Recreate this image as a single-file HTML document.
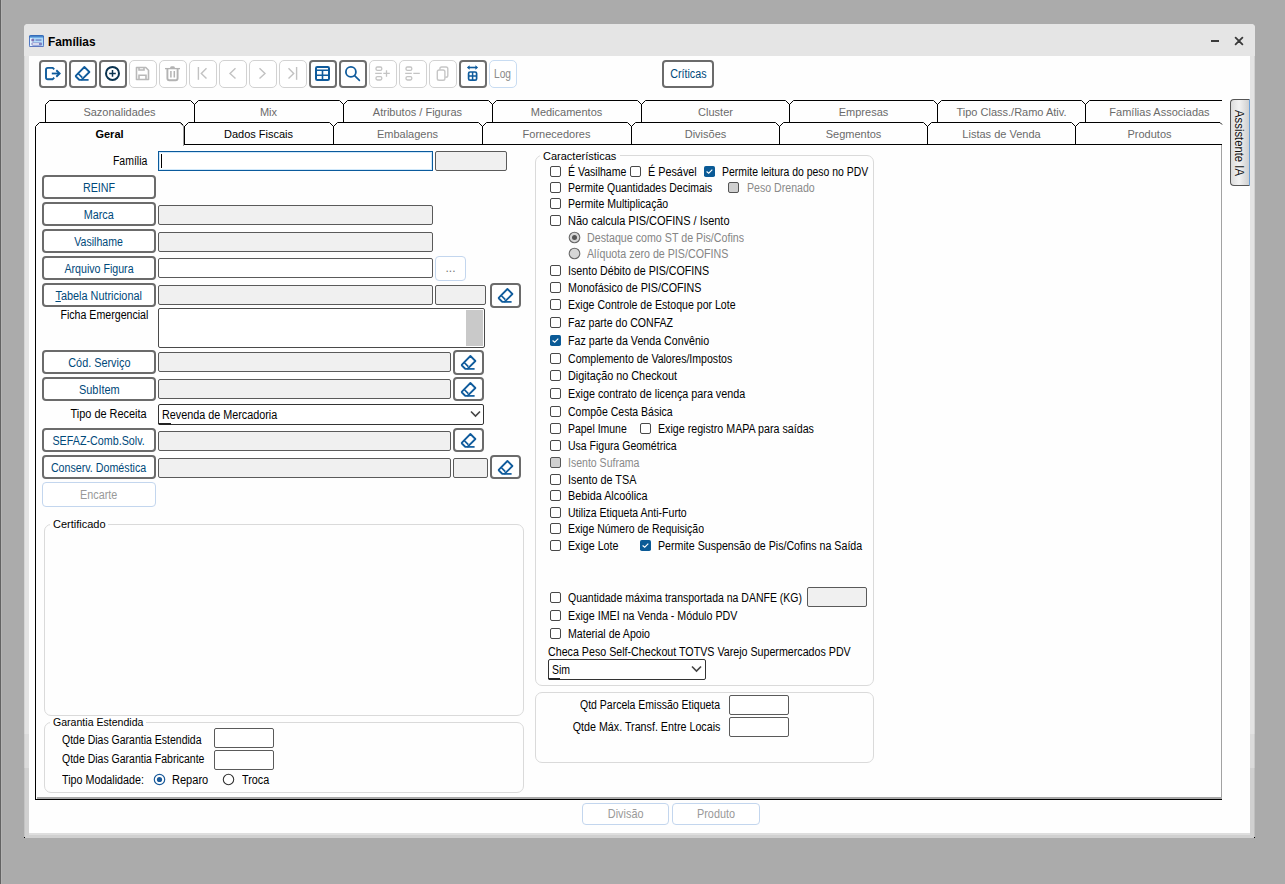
<!DOCTYPE html><html><head><meta charset="utf-8"><style>
html,body{margin:0;padding:0}
body{width:1285px;height:884px;position:relative;overflow:hidden;background:#ababab;font-family:"Liberation Sans",sans-serif}
.t{position:absolute;white-space:nowrap}
.b{position:absolute;box-sizing:border-box}
svg{position:absolute;overflow:visible}
</style></head><body>
<div class="b" style="left:0px;top:0px;width:1px;height:884px;background:#626262"></div>
<div class="b" style="left:1px;top:0px;width:1px;height:884px;background:#b3b3b3"></div>
<div class="b" style="left:24px;top:24px;width:1231px;height:814px;background:linear-gradient(#e3e3e3 0,#e3e3e3 710px,#dbdbdb 710px,#dbdbdb 744px,#d0d0d0 744px);border-radius:4px 4px 0 0"></div>
<div class="b" style="left:24px;top:56px;width:1px;height:782px;background:rgba(0,0,0,.06)"></div>
<div class="b" style="left:1254px;top:56px;width:1px;height:782px;background:rgba(0,0,0,.08)"></div>
<div class="b" style="left:24px;top:24px;width:1231px;height:32px;background:#e5e5e5;border-radius:4px 4px 0 0"></div>
<div class="b" style="left:29px;top:56px;width:1221px;height:777px;background:#fefefe"></div>
<div class="b" style="left:29px;top:833px;width:1221px;height:2px;background:#dedede"></div>
<svg style="left:29px;top:35px" width="16" height="13" viewBox="0 0 16 13">
<rect x="0.5" y="0.5" width="14" height="11" rx="0.8" fill="#b4defa" stroke="#4f78c4"/>
<path d="M0.5 1.2Q0.5 0.5 1.2 0.5H13.8Q14.5 0.5 14.5 1.2V2.2H0.5Z" fill="#1f5fae"/>
<rect x="1" y="1.5" width="13" height="1.6" fill="#73aee6"/>
<rect x="1" y="3.2" width="3" height="8" fill="#e4f4ff"/>
<circle cx="3.8" cy="5" r="1.6" fill="#7f73b4"/>
<rect x="6.5" y="4.4" width="6" height="1.3" fill="#6f7fc0"/>
<rect x="2.5" y="7.6" width="10.5" height="2.8" rx="0.8" fill="#7f7fc0"/>
<rect x="3.5" y="8.3" width="6.5" height="1.4" fill="#fff"/>
<path d="M0.5 11.5H14.5" stroke="#5f78c0" stroke-width="1"/>
</svg>
<div class="t" style="left:48px;top:35px;font:bold 12px/14px 'Liberation Sans';color:#000;transform:scaleX(0.99);transform-origin:0 0;">Famílias</div>
<div class="b" style="left:1211px;top:40px;width:8px;height:2px;background:#3a3a3a"></div>
<svg style="left:1234px;top:36px" width="11" height="11" viewBox="0 0 11 11"><path d="M1.6 1.6L8.4 8.4M8.4 1.6L1.6 8.4" stroke="#3a3a3a" stroke-width="1.8" stroke-linecap="round"/></svg>
<div class="b" style="left:1254px;top:837px;width:1px;height:1px;background:#000"></div>
<div class="b" style="left:24px;top:837px;width:1px;height:1px;background:#000"></div>
<div class="b" style="left:39px;top:60px;width:28px;height:28px;border:2px solid #6e6e6e;border-radius:4px;background:#fff"></div>
<svg style="left:39px;top:60px" width="28" height="28" viewBox="0 0 28 28"><path d="M15.2 9.4L13.8 7.9H8.8Q7 7.9 7 9.7V17.4Q7 19.2 8.8 19.2H13.8L15.2 17.7" fill="none" stroke="#0f5b9c" stroke-width="1.9" stroke-linejoin="round"/><path d="M12.8 13.5H20" stroke="#0f5b9c" stroke-width="1.8"/><path d="M17.3 10.3L20.6 13.5L17.3 16.7" fill="none" stroke="#0f5b9c" stroke-width="1.9"/></svg>
<div class="b" style="left:69px;top:60px;width:28px;height:28px;border:2px solid #6e6e6e;border-radius:4px;background:#fff"></div>
<svg style="left:69px;top:60px" width="28" height="28" viewBox="0 0 28 28"><path d="M6.9 15.6L15.4 7L20.4 12L12.5 19.9H10.9Q10.3 19.9 9.9 19.5L6.9 16.5Q6.5 16 6.9 15.6Z" fill="none" stroke="#0f5b9c" stroke-width="1.8" stroke-linejoin="round"/><path d="M9.2 13.5L13.3 17.6" stroke="#0f5b9c" stroke-width="1.7"/><path d="M12.5 19.9H19.6" stroke="#0f5b9c" stroke-width="1.7"/></svg>
<div class="b" style="left:99px;top:60px;width:28px;height:28px;border:2px solid #6e6e6e;border-radius:4px;background:#fff"></div>
<svg style="left:99px;top:60px" width="28" height="28" viewBox="0 0 28 28"><circle cx="13.5" cy="13.4" r="6.5" fill="none" stroke="#0a3350" stroke-width="2"/><path d="M13.5 10.1V16.7M10.2 13.4H16.8" stroke="#0a3350" stroke-width="1.5"/></svg>
<div class="b" style="left:129px;top:60px;width:28px;height:28px;border:1.5px solid #d2d2d2;border-radius:5px;background:#fff"></div>
<svg style="left:129px;top:60px" width="28" height="28" viewBox="0 0 28 28"><path d="M7.5 7.5H16.8L19.5 10.2V19.5H7.5Z" fill="none" stroke="#b9b9b9" stroke-width="1.6" stroke-linejoin="round"/><path d="M10 7.7V10H15V7.7" fill="none" stroke="#b9b9b9" stroke-width="1.6"/><path d="M10 19.3V15.3H17V19.3" fill="none" stroke="#b9b9b9" stroke-width="1.6"/></svg>
<div class="b" style="left:159px;top:60px;width:28px;height:28px;border:1.5px solid #d2d2d2;border-radius:5px;background:#fff"></div>
<svg style="left:159px;top:60px" width="28" height="28" viewBox="0 0 28 28"><path d="M6 8.6H21" stroke="#b3b3b3" stroke-width="1.3"/><path d="M11 8.3Q11 6.3 12.5 6.3H14.5Q16 6.3 16 8.3Z" fill="#b3b3b3"/><path d="M8.4 8.8V18.3Q8.4 20.2 10.3 20.2H16.7Q18.6 20.2 18.6 18.3V8.8" fill="none" stroke="#b3b3b3" stroke-width="1.9"/><path d="M11.9 11V17.4M15.3 11V17.4" stroke="#b3b3b3" stroke-width="1.5"/></svg>
<div class="b" style="left:189px;top:60px;width:28px;height:28px;border:1.5px solid #d2d2d2;border-radius:5px;background:#fff"></div>
<svg style="left:189px;top:60px" width="28" height="28" viewBox="0 0 28 28"><path d="M9.4 7V19.8" stroke="#c2c2c2" stroke-width="1.4"/><path d="M17.5 8.3L12.3 13.4L17.5 18.5" fill="none" stroke="#c2c2c2" stroke-width="1.4"/></svg>
<div class="b" style="left:219px;top:60px;width:28px;height:28px;border:1.5px solid #d2d2d2;border-radius:5px;background:#fff"></div>
<svg style="left:219px;top:60px" width="28" height="28" viewBox="0 0 28 28"><path d="M16.5 8.2L11 13.4L16.5 18.6" fill="none" stroke="#c2c2c2" stroke-width="1.4"/></svg>
<div class="b" style="left:249px;top:60px;width:28px;height:28px;border:1.5px solid #d2d2d2;border-radius:5px;background:#fff"></div>
<svg style="left:249px;top:60px" width="28" height="28" viewBox="0 0 28 28"><path d="M10.5 8.2L16 13.4L10.5 18.6" fill="none" stroke="#c2c2c2" stroke-width="1.4"/></svg>
<div class="b" style="left:279px;top:60px;width:28px;height:28px;border:1.5px solid #d2d2d2;border-radius:5px;background:#fff"></div>
<svg style="left:279px;top:60px" width="28" height="28" viewBox="0 0 28 28"><path d="M17.6 7V19.8" stroke="#c2c2c2" stroke-width="1.4"/><path d="M9.5 8.3L14.7 13.4L9.5 18.5" fill="none" stroke="#c2c2c2" stroke-width="1.4"/></svg>
<div class="b" style="left:309px;top:60px;width:28px;height:28px;border:2px solid #6e6e6e;border-radius:4px;background:#fff"></div>
<svg style="left:309px;top:60px" width="28" height="28" viewBox="0 0 28 28"><rect x="7" y="7" width="13" height="13" rx="1.2" fill="none" stroke="#0f5b9c" stroke-width="2"/><path d="M7 10.3H20M7 15.2H20M13.5 10.3V20" stroke="#0f5b9c" stroke-width="1.6"/></svg>
<div class="b" style="left:339px;top:60px;width:28px;height:28px;border:2px solid #6e6e6e;border-radius:4px;background:#fff"></div>
<svg style="left:339px;top:60px" width="28" height="28" viewBox="0 0 28 28"><circle cx="11.9" cy="11.9" r="5" fill="none" stroke="#0f5b9c" stroke-width="1.8"/><path d="M15.6 15.6L20.4 20.4" stroke="#0f5b9c" stroke-width="1.6" stroke-linecap="round"/></svg>
<div class="b" style="left:369px;top:60px;width:28px;height:28px;border:1.5px solid #d2d2d2;border-radius:5px;background:#fff"></div>
<svg style="left:369px;top:60px" width="28" height="28" viewBox="0 0 28 28"><rect x="7" y="7" width="5.8" height="3.4" rx="1.4" fill="none" stroke="#c4c4c4" stroke-width="1.3"/><rect x="7" y="16.6" width="5.8" height="3.4" rx="1.4" fill="none" stroke="#c4c4c4" stroke-width="1.3"/><path d="M6.2 13.4H12.8M14.3 13.4H20.8M17.5 10.2V16.8" stroke="#c4c4c4" stroke-width="1.3"/></svg>
<div class="b" style="left:399px;top:60px;width:28px;height:28px;border:1.5px solid #d2d2d2;border-radius:5px;background:#fff"></div>
<svg style="left:399px;top:60px" width="28" height="28" viewBox="0 0 28 28"><rect x="7" y="7" width="5.8" height="3.4" rx="1.4" fill="none" stroke="#c4c4c4" stroke-width="1.3"/><rect x="7" y="16.6" width="5.8" height="3.4" rx="1.4" fill="none" stroke="#c4c4c4" stroke-width="1.3"/><path d="M6.2 13.4H12.8M14.3 13.4H20.8" stroke="#c4c4c4" stroke-width="1.3"/></svg>
<div class="b" style="left:429px;top:60px;width:28px;height:28px;border:1.5px solid #d2d2d2;border-radius:5px;background:#fff"></div>
<svg style="left:429px;top:60px" width="28" height="28" viewBox="0 0 28 28"><rect x="8.3" y="10" width="7.6" height="10.2" rx="1.8" fill="none" stroke="#c6c6c6" stroke-width="1.4"/><path d="M10.9 9.8V8.8Q10.9 7 12.7 7H17Q18.8 7 18.8 8.8V15.4Q18.8 17.2 17 17.2H16.2" fill="none" stroke="#c6c6c6" stroke-width="1.4"/></svg>
<div class="b" style="left:459px;top:60px;width:28px;height:28px;border:2px solid #6e6e6e;border-radius:4px;background:#fff"></div>
<svg style="left:459px;top:60px" width="28" height="28" viewBox="0 0 28 28"><path d="M9.5 7.5H17.5" stroke="#0f5b9c" stroke-width="1.6"/><path d="M7.9 7.5L10.6 5.3V9.7Z M19.1 7.5L16.4 5.3V9.7Z" fill="#0f5b9c"/><rect x="9.6" y="12" width="8" height="8.2" rx="1.5" fill="none" stroke="#0f5b9c" stroke-width="1.7"/><path d="M9.6 16.1H17.6M13.6 12V20.2" stroke="#0f5b9c" stroke-width="1.5"/></svg>
<div class="b" style="left:489px;top:60px;width:28px;height:28px;border:1.5px solid #c8dcf2;border-radius:5px;background:#fff"></div>
<div class="t" style="left:494px;top:67px;font:12px/14px 'Liberation Sans';color:#8a8a8a;transform:scaleX(0.85);transform-origin:0 0;">Log</div>
<svg style="left:0;top:0" width="1285" height="884" viewBox="0 0 1285 884"><path d="M45.5 122V104.5L49.5 100.5H190.5L194.5 104.5L198.5 100.5H339.5L343.5 104.5L347.5 100.5H488.5L492.5 104.5L496.5 100.5H637.5L641.5 104.5L645.5 100.5H785.5L789.5 104.5L793.5 100.5H933.5L937.5 104.5L941.5 100.5H1081.5L1085.5 104.5L1089.5 100.5H1222" fill="none" stroke="#000" stroke-width="1"/><path d="M194.5 104V122" stroke="#000" stroke-width="1"/><path d="M343.5 104V122" stroke="#000" stroke-width="1"/><path d="M492.5 104V122" stroke="#000" stroke-width="1"/><path d="M641.5 104V122" stroke="#000" stroke-width="1"/><path d="M789.5 104V122" stroke="#000" stroke-width="1"/><path d="M937.5 104V122" stroke="#000" stroke-width="1"/><path d="M1085.5 104V122" stroke="#000" stroke-width="1"/><path d="M35.5 800V126.5L39.5 122.5H180.5L184.5 126.5L188.5 122.5H329.5L333.5 126.5L337.5 122.5H478.5L482.5 126.5L486.5 122.5H627.5L631.5 126.5L635.5 122.5H775.5L779.5 126.5L783.5 122.5H923.5L927.5 126.5L931.5 122.5H1071.5L1075.5 126.5L1079.5 122.5H1220L1222 124.5" fill="none" stroke="#000" stroke-width="1"/><path d="M184.5 126V144" stroke="#000" stroke-width="1"/><path d="M333.5 126V144" stroke="#000" stroke-width="1"/><path d="M482.5 126V144" stroke="#000" stroke-width="1"/><path d="M631.5 126V144" stroke="#000" stroke-width="1"/><path d="M779.5 126V144" stroke="#000" stroke-width="1"/><path d="M927.5 126V144" stroke="#000" stroke-width="1"/><path d="M1075.5 126V144" stroke="#000" stroke-width="1"/><path d="M184 144.5H1222" stroke="#000" stroke-width="1"/><path d="M183.5 125V146" stroke="#a0a0a0" stroke-width="1"/><path d="M180 123L183.5 126.5" stroke="#a0a0a0" stroke-width="1"/><path d="M1221.5 145V798" stroke="#a2a2a2" stroke-width="1"/><path d="M37 797.5H1222M37 798.5H1222" stroke="#a8a8a8" stroke-width="1"/><path d="M35 799.5H1222" stroke="#000" stroke-width="1"/></svg>
<div class="t" style="left:45px;width:149px;top:105px;text-align:center;font:11px/14px 'Liberation Sans';color:#6a6a6a;"><span style="display:inline-block;transform:scaleX(1.0);transform-origin:50% 0">Sazonalidades</span></div>
<div class="t" style="left:194px;width:149px;top:105px;text-align:center;font:11px/14px 'Liberation Sans';color:#6a6a6a;"><span style="display:inline-block;transform:scaleX(1.0);transform-origin:50% 0">Mix</span></div>
<div class="t" style="left:343px;width:149px;top:105px;text-align:center;font:11px/14px 'Liberation Sans';color:#6a6a6a;"><span style="display:inline-block;transform:scaleX(1.0);transform-origin:50% 0">Atributos / Figuras</span></div>
<div class="t" style="left:492px;width:149px;top:105px;text-align:center;font:11px/14px 'Liberation Sans';color:#6a6a6a;"><span style="display:inline-block;transform:scaleX(1.0);transform-origin:50% 0">Medicamentos</span></div>
<div class="t" style="left:641px;width:149px;top:105px;text-align:center;font:11px/14px 'Liberation Sans';color:#6a6a6a;"><span style="display:inline-block;transform:scaleX(1.0);transform-origin:50% 0">Cluster</span></div>
<div class="t" style="left:789px;width:149px;top:105px;text-align:center;font:11px/14px 'Liberation Sans';color:#6a6a6a;"><span style="display:inline-block;transform:scaleX(1.0);transform-origin:50% 0">Empresas</span></div>
<div class="t" style="left:937px;width:149px;top:105px;text-align:center;font:11px/14px 'Liberation Sans';color:#6a6a6a;"><span style="display:inline-block;transform:scaleX(1.0);transform-origin:50% 0">Tipo Class./Ramo Ativ.</span></div>
<div class="t" style="left:1085px;width:149px;top:105px;text-align:center;font:11px/14px 'Liberation Sans';color:#6a6a6a;"><span style="display:inline-block;transform:scaleX(1.0);transform-origin:50% 0">Famílias Associadas</span></div>
<div class="t" style="left:35px;width:149px;top:127px;text-align:center;font:bold 11px/14px 'Liberation Sans';color:#000;"><span style="display:inline-block;transform:scaleX(1.0);transform-origin:50% 0">Geral</span></div>
<div class="t" style="left:184px;width:149px;top:127px;text-align:center;font:11px/14px 'Liberation Sans';color:#000;"><span style="display:inline-block;transform:scaleX(1.0);transform-origin:50% 0">Dados Fiscais</span></div>
<div class="t" style="left:333px;width:149px;top:127px;text-align:center;font:11px/14px 'Liberation Sans';color:#6a6a6a;"><span style="display:inline-block;transform:scaleX(1.0);transform-origin:50% 0">Embalagens</span></div>
<div class="t" style="left:482px;width:149px;top:127px;text-align:center;font:11px/14px 'Liberation Sans';color:#6a6a6a;"><span style="display:inline-block;transform:scaleX(1.0);transform-origin:50% 0">Fornecedores</span></div>
<div class="t" style="left:631px;width:149px;top:127px;text-align:center;font:11px/14px 'Liberation Sans';color:#6a6a6a;"><span style="display:inline-block;transform:scaleX(1.0);transform-origin:50% 0">Divisões</span></div>
<div class="t" style="left:779px;width:149px;top:127px;text-align:center;font:11px/14px 'Liberation Sans';color:#6a6a6a;"><span style="display:inline-block;transform:scaleX(1.0);transform-origin:50% 0">Segmentos</span></div>
<div class="t" style="left:927px;width:149px;top:127px;text-align:center;font:11px/14px 'Liberation Sans';color:#6a6a6a;"><span style="display:inline-block;transform:scaleX(1.0);transform-origin:50% 0">Listas de Venda</span></div>
<div class="t" style="left:1075px;width:149px;top:127px;text-align:center;font:11px/14px 'Liberation Sans';color:#6a6a6a;"><span style="display:inline-block;transform:scaleX(1.0);transform-origin:50% 0">Produtos</span></div>
<div class="t" style="right:1138px;top:154px;font:12px/14px 'Liberation Sans';color:#000;transform:scaleX(0.875);transform-origin:100% 0;">Família</div>
<div class="b" style="left:158px;top:151px;width:275px;height:20px;border:1px solid #0a5a9c;box-shadow:inset 0 0 0 1px #cfe8fb;background:#fff"></div>
<div class="b" style="left:161px;top:154px;width:1px;height:14px;background:#000"></div>
<div class="b" style="left:435px;top:151px;width:72px;height:20px;border:1px solid #5a5a5a;border-radius:2px;background:#f0f0f0"></div>
<div class="b" style="left:42px;top:175px;width:114px;height:24px;border:2px solid #6b6b6b;border-radius:4px;background:#fff"></div>
<div class="t" style="left:42px;width:114px;top:181px;text-align:center;font:12px/14px 'Liberation Sans';color:#00497a;"><span style="display:inline-block;transform:scaleX(0.8929);transform-origin:50% 0">REINF</span></div>
<div class="b" style="left:42px;top:202px;width:114px;height:24px;border:2px solid #6b6b6b;border-radius:4px;background:#fff"></div>
<div class="t" style="left:42px;width:114px;top:208px;text-align:center;font:12px/14px 'Liberation Sans';color:#00497a;"><span style="display:inline-block;transform:scaleX(0.9004);transform-origin:50% 0">Marca</span></div>
<div class="b" style="left:158px;top:205px;width:275px;height:20px;border:1px solid #5a5a5a;border-radius:2px;background:#f0f0f0"></div>
<div class="b" style="left:42px;top:229px;width:114px;height:24px;border:2px solid #6b6b6b;border-radius:4px;background:#fff"></div>
<div class="t" style="left:42px;width:114px;top:235px;text-align:center;font:12px/14px 'Liberation Sans';color:#00497a;"><span style="display:inline-block;transform:scaleX(0.8791);transform-origin:50% 0">Vasilhame</span></div>
<div class="b" style="left:158px;top:232px;width:275px;height:20px;border:1px solid #5a5a5a;border-radius:2px;background:#f0f0f0"></div>
<div class="b" style="left:42px;top:256px;width:114px;height:24px;border:2px solid #6b6b6b;border-radius:4px;background:#fff"></div>
<div class="t" style="left:42px;width:114px;top:262px;text-align:center;font:12px/14px 'Liberation Sans';color:#00497a;"><span style="display:inline-block;transform:scaleX(0.8853);transform-origin:50% 0">Arquivo Figura</span></div>
<div class="b" style="left:158px;top:258px;width:275px;height:20px;border:1px solid #5a5a5a;border-radius:2px;background:#fff"></div>
<div class="b" style="left:435px;top:256px;width:31px;height:25px;border:1.5px solid #c3d6ee;border-radius:4px;background:#fff"></div>
<div class="t" style="left:435px;width:31px;top:261px;text-align:center;font:12px/14px 'Liberation Sans';color:#777;"><span style="display:inline-block;transform:scaleX(1);transform-origin:50% 0">...</span></div>
<div class="b" style="left:42px;top:283px;width:114px;height:24px;border:2px solid #6b6b6b;border-radius:4px;background:#fff"></div>
<div class="t" style="left:42px;width:114px;top:289px;text-align:center;font:12px/14px 'Liberation Sans';color:#00497a;"><span style="display:inline-block;transform:scaleX(0.9067);transform-origin:50% 0"><span style="text-decoration:underline">T</span>abela Nutricional</span></div>
<div class="b" style="left:158px;top:285px;width:275px;height:20px;border:1px solid #5a5a5a;border-radius:2px;background:#f0f0f0"></div>
<div class="b" style="left:435px;top:285px;width:51px;height:20px;border:1px solid #5a5a5a;border-radius:2px;background:#f0f0f0"></div>
<div class="b" style="left:490px;top:283px;width:31px;height:25px;border:2px solid #6b6b6b;border-radius:4px;background:#fff"></div>
<svg style="left:491.9px;top:282px" width="28" height="28" viewBox="0 0 28 28"><path d="M6.9 15.6L15.4 7L20.4 12L12.5 19.9H10.9Q10.3 19.9 9.9 19.5L6.9 16.5Q6.5 16 6.9 15.6Z" fill="none" stroke="#0f5b9c" stroke-width="1.8" stroke-linejoin="round"/><path d="M9.2 13.5L13.3 17.6" stroke="#0f5b9c" stroke-width="1.7"/><path d="M12.5 19.9H19.6" stroke="#0f5b9c" stroke-width="1.7"/></svg>
<div class="t" style="right:1137px;top:308px;font:12px/14px 'Liberation Sans';color:#000;transform:scaleX(0.885);transform-origin:100% 0;">Ficha Emergencial</div>
<div class="b" style="left:158px;top:308px;width:327px;height:40px;border:1px solid #4a4a4a;border-radius:2px;background:#fff"></div>
<div class="b" style="left:466px;top:310px;width:17px;height:36px;background:#c9c9c9"></div>
<div class="b" style="left:42px;top:350px;width:114px;height:24px;border:2px solid #6b6b6b;border-radius:4px;background:#fff"></div>
<div class="t" style="left:42px;width:114px;top:356px;text-align:center;font:12px/14px 'Liberation Sans';color:#00497a;"><span style="display:inline-block;transform:scaleX(0.9047);transform-origin:50% 0">Cód. Serviço</span></div>
<div class="b" style="left:158px;top:352px;width:293px;height:20px;border:1px solid #5a5a5a;border-radius:2px;background:#f0f0f0"></div>
<div class="b" style="left:453px;top:350px;width:31px;height:25px;border:2px solid #6b6b6b;border-radius:4px;background:#fff"></div>
<svg style="left:454.9px;top:349px" width="28" height="28" viewBox="0 0 28 28"><path d="M6.9 15.6L15.4 7L20.4 12L12.5 19.9H10.9Q10.3 19.9 9.9 19.5L6.9 16.5Q6.5 16 6.9 15.6Z" fill="none" stroke="#0f5b9c" stroke-width="1.8" stroke-linejoin="round"/><path d="M9.2 13.5L13.3 17.6" stroke="#0f5b9c" stroke-width="1.7"/><path d="M12.5 19.9H19.6" stroke="#0f5b9c" stroke-width="1.7"/></svg>
<div class="b" style="left:42px;top:377px;width:114px;height:24px;border:2px solid #6b6b6b;border-radius:4px;background:#fff"></div>
<div class="t" style="left:42px;width:114px;top:383px;text-align:center;font:12px/14px 'Liberation Sans';color:#00497a;"><span style="display:inline-block;transform:scaleX(0.9129);transform-origin:50% 0">SubItem</span></div>
<div class="b" style="left:158px;top:379px;width:293px;height:20px;border:1px solid #5a5a5a;border-radius:2px;background:#f0f0f0"></div>
<div class="b" style="left:453px;top:377px;width:31px;height:24px;border:2px solid #6b6b6b;border-radius:4px;background:#fff"></div>
<svg style="left:454.9px;top:376px" width="28" height="28" viewBox="0 0 28 28"><path d="M6.9 15.6L15.4 7L20.4 12L12.5 19.9H10.9Q10.3 19.9 9.9 19.5L6.9 16.5Q6.5 16 6.9 15.6Z" fill="none" stroke="#0f5b9c" stroke-width="1.8" stroke-linejoin="round"/><path d="M9.2 13.5L13.3 17.6" stroke="#0f5b9c" stroke-width="1.7"/><path d="M12.5 19.9H19.6" stroke="#0f5b9c" stroke-width="1.7"/></svg>
<div class="t" style="right:1138px;top:407px;font:12px/14px 'Liberation Sans';color:#000;transform:scaleX(0.91);transform-origin:100% 0;">Tipo de Receita</div>
<div class="b" style="left:158px;top:404px;width:326px;height:21px;border:1px solid #333;border-radius:2px;background:#fff"></div>
<div class="t" style="left:162px;top:408px;font:12px/14px 'Liberation Sans';color:#000;transform:scaleX(0.9);transform-origin:0 0;">Revenda de Mercadoria</div>
<div class="b" style="left:158px;top:423px;width:13px;height:2px;background:#222;border-radius:0 0 0 2px"></div>
<svg style="left:470px;top:410px" width="12" height="8" viewBox="0 0 12 8"><path d="M1 1.5L5.5 6L10 1.5" fill="none" stroke="#444" stroke-width="1.6"/></svg>
<div class="b" style="left:42px;top:428px;width:114px;height:24px;border:2px solid #6b6b6b;border-radius:4px;background:#fff"></div>
<div class="t" style="left:42px;width:114px;top:434px;text-align:center;font:12px/14px 'Liberation Sans';color:#00497a;"><span style="display:inline-block;transform:scaleX(0.8947);transform-origin:50% 0">SEFAZ-Comb.Solv.</span></div>
<div class="b" style="left:158px;top:431px;width:293px;height:20px;border:1px solid #5a5a5a;border-radius:2px;background:#f0f0f0"></div>
<div class="b" style="left:453px;top:428px;width:31px;height:24px;border:2px solid #6b6b6b;border-radius:4px;background:#fff"></div>
<svg style="left:454.9px;top:427px" width="28" height="28" viewBox="0 0 28 28"><path d="M6.9 15.6L15.4 7L20.4 12L12.5 19.9H10.9Q10.3 19.9 9.9 19.5L6.9 16.5Q6.5 16 6.9 15.6Z" fill="none" stroke="#0f5b9c" stroke-width="1.8" stroke-linejoin="round"/><path d="M9.2 13.5L13.3 17.6" stroke="#0f5b9c" stroke-width="1.7"/><path d="M12.5 19.9H19.6" stroke="#0f5b9c" stroke-width="1.7"/></svg>
<div class="b" style="left:42px;top:455px;width:114px;height:24px;border:2px solid #6b6b6b;border-radius:4px;background:#fff"></div>
<div class="t" style="left:42px;width:114px;top:461px;text-align:center;font:12px/14px 'Liberation Sans';color:#00497a;"><span style="display:inline-block;transform:scaleX(0.89);transform-origin:50% 0">Conserv. Doméstica</span></div>
<div class="b" style="left:158px;top:458px;width:293px;height:20px;border:1px solid #5a5a5a;border-radius:2px;background:#f0f0f0"></div>
<div class="b" style="left:453px;top:458px;width:35px;height:20px;border:1px solid #5a5a5a;border-radius:2px;background:#f0f0f0"></div>
<div class="b" style="left:490px;top:455px;width:31px;height:24px;border:2px solid #6b6b6b;border-radius:4px;background:#fff"></div>
<svg style="left:491.9px;top:454px" width="28" height="28" viewBox="0 0 28 28"><path d="M6.9 15.6L15.4 7L20.4 12L12.5 19.9H10.9Q10.3 19.9 9.9 19.5L6.9 16.5Q6.5 16 6.9 15.6Z" fill="none" stroke="#0f5b9c" stroke-width="1.8" stroke-linejoin="round"/><path d="M9.2 13.5L13.3 17.6" stroke="#0f5b9c" stroke-width="1.7"/><path d="M12.5 19.9H19.6" stroke="#0f5b9c" stroke-width="1.7"/></svg>
<div class="b" style="left:42px;top:482px;width:114px;height:25px;border:1.5px solid #c3d6ee;border-radius:4px;background:#fff"></div>
<div class="t" style="left:42px;width:114px;top:488px;text-align:center;font:12px/14px 'Liberation Sans';color:#999;"><span style="display:inline-block;transform:scaleX(0.8995);transform-origin:50% 0">Encarte</span></div>
<div class="b" style="left:44px;top:524px;width:480px;height:192px;border:1px solid #dadada;border-radius:7px"></div>
<div class="b" style="left:50px;top:521px;width:58px;height:6px;background:#fefefe"></div>
<div class="t" style="left:53px;top:517px;font:11px/14px 'Liberation Sans';color:#000;transform:scaleX(1.0);transform-origin:0 0;">Certificado</div>
<div class="b" style="left:44px;top:722px;width:480px;height:71px;border:1px solid #dadada;border-radius:7px"></div>
<div class="b" style="left:50px;top:719px;width:96px;height:6px;background:#fefefe"></div>
<div class="t" style="left:53px;top:715px;font:11px/14px 'Liberation Sans';color:#000;transform:scaleX(0.96);transform-origin:0 0;">Garantia Estendida</div>
<div class="t" style="left:62px;top:733px;font:12px/14px 'Liberation Sans';color:#000;transform:scaleX(0.875);transform-origin:0 0;">Qtde Dias Garantia Estendida</div>
<div class="b" style="left:214px;top:728px;width:60px;height:20px;border:1px solid #5a5a5a;border-radius:2px;background:#fff"></div>
<div class="t" style="left:62px;top:752px;font:12px/14px 'Liberation Sans';color:#000;transform:scaleX(0.875);transform-origin:0 0;">Qtde Dias Garantia Fabricante</div>
<div class="b" style="left:214px;top:750px;width:60px;height:20px;border:1px solid #5a5a5a;border-radius:2px;background:#fff"></div>
<div class="t" style="left:62px;top:773px;font:12px/14px 'Liberation Sans';color:#000;transform:scaleX(0.895);transform-origin:0 0;">Tipo Modalidade:</div>
<svg style="left:153px;top:773px" width="13" height="13" viewBox="0 0 13 13"><circle cx="6.5" cy="6.5" r="5.2" fill="#fff" stroke="#1a5a9a" stroke-width="1.2"/><circle cx="6.5" cy="6.5" r="2.6" fill="#1a5a9a"/></svg>
<div class="t" style="left:172px;top:773px;font:12px/14px 'Liberation Sans';color:#000;transform:scaleX(0.92);transform-origin:0 0;">Reparo</div>
<svg style="left:222px;top:773px" width="13" height="13" viewBox="0 0 13 13"><circle cx="6.5" cy="6.5" r="5.2" fill="#fff" stroke="#333" stroke-width="1.1"/></svg>
<div class="t" style="left:242px;top:773px;font:12px/14px 'Liberation Sans';color:#000;transform:scaleX(0.9);transform-origin:0 0;">Troca</div>
<div class="b" style="left:535px;top:155px;width:339px;height:531px;border:1px solid #dadada;border-radius:7px"></div>
<div class="b" style="left:540px;top:152px;width:80px;height:6px;background:#fefefe"></div>
<div class="t" style="left:543px;top:149px;font:11px/14px 'Liberation Sans';color:#000;transform:scaleX(1.0);transform-origin:0 0;">Características</div>
<div class="b" style="left:550px;top:166px;width:11px;height:11px;border:1px solid #484848;border-radius:2px;background:#fff"></div>
<div class="t" style="left:568px;top:165px;font:12px/14px 'Liberation Sans';color:#000;transform:scaleX(0.878);transform-origin:0 0;">É Vasilhame</div>
<div class="b" style="left:630px;top:166px;width:11px;height:11px;border:1px solid #484848;border-radius:2px;background:#fff"></div>
<div class="t" style="left:648px;top:165px;font:12px/14px 'Liberation Sans';color:#000;transform:scaleX(0.9016);transform-origin:0 0;">É Pesável</div>
<svg style="left:704px;top:166px" width="11" height="11" viewBox="0 0 11 11"><rect x="0" y="0" width="11" height="11" rx="1.8" fill="#0a5a96"/><path d="M2.6 5.5L4.7 7.2L8.3 3.7" fill="none" stroke="#fff" stroke-width="1.15"/></svg>
<div class="t" style="left:722px;top:165px;font:12px/14px 'Liberation Sans';color:#000;transform:scaleX(0.8702);transform-origin:0 0;">Permite leitura do peso no PDV</div>
<div class="b" style="left:550px;top:182px;width:11px;height:11px;border:1px solid #484848;border-radius:2px;background:#fff"></div>
<div class="t" style="left:568px;top:181px;font:12px/14px 'Liberation Sans';color:#000;transform:scaleX(0.8726);transform-origin:0 0;">Permite Quantidades Decimais</div>
<div class="b" style="left:728px;top:182px;width:11px;height:11px;border:1px solid #555;border-radius:2px;background:#d0d0d0"></div>
<div class="t" style="left:747px;top:181px;font:12px/14px 'Liberation Sans';color:#8a8a8a;transform:scaleX(0.883);transform-origin:0 0;">Peso Drenado</div>
<div class="b" style="left:550px;top:198px;width:11px;height:11px;border:1px solid #484848;border-radius:2px;background:#fff"></div>
<div class="t" style="left:568px;top:197px;font:12px/14px 'Liberation Sans';color:#000;transform:scaleX(0.8786);transform-origin:0 0;">Permite Multiplicação</div>
<div class="b" style="left:550px;top:215px;width:11px;height:11px;border:1px solid #484848;border-radius:2px;background:#fff"></div>
<div class="t" style="left:568px;top:214px;font:12px/14px 'Liberation Sans';color:#000;transform:scaleX(0.9139);transform-origin:0 0;">Não calcula PIS/COFINS / Isento</div>
<svg style="left:568px;top:231px" width="13" height="13" viewBox="0 0 13 13"><circle cx="6.5" cy="6.5" r="5.3" fill="#d6d6d6" stroke="#6a6a6a" stroke-width="1.1"/><circle cx="6.5" cy="6.5" r="2.5" fill="#555"/></svg>
<div class="t" style="left:587px;top:231px;width:157px;overflow:hidden;height:14px"><div class="t" style="left:0;top:0;font:12px/14px 'Liberation Sans';color:#858585;transform:scaleX(.89);transform-origin:0 0">Destaque como ST de Pis/Cofins</div></div>
<svg style="left:568px;top:247px" width="13" height="13" viewBox="0 0 13 13"><circle cx="6.5" cy="6.5" r="5.3" fill="#d6d6d6" stroke="#6a6a6a" stroke-width="1.1"/></svg>
<div class="t" style="left:587px;top:247px;font:12px/14px 'Liberation Sans';color:#858585;transform:scaleX(0.89);transform-origin:0 0;">Alíquota zero de PIS/COFINS</div>
<div class="b" style="left:550px;top:265px;width:11px;height:11px;border:1px solid #484848;border-radius:2px;background:#fff"></div>
<div class="t" style="left:568px;top:264px;font:12px/14px 'Liberation Sans';color:#000;transform:scaleX(0.8889);transform-origin:0 0;">Isento Débito de PIS/COFINS</div>
<div class="b" style="left:550px;top:282px;width:11px;height:11px;border:1px solid #484848;border-radius:2px;background:#fff"></div>
<div class="t" style="left:568px;top:281px;font:12px/14px 'Liberation Sans';color:#000;transform:scaleX(0.8927);transform-origin:0 0;">Monofásico de PIS/COFINS</div>
<div class="b" style="left:550px;top:299px;width:11px;height:11px;border:1px solid #484848;border-radius:2px;background:#fff"></div>
<div class="t" style="left:568px;top:298px;font:12px/14px 'Liberation Sans';color:#000;transform:scaleX(0.8813);transform-origin:0 0;">Exige Controle de Estoque por Lote</div>
<div class="b" style="left:550px;top:317px;width:11px;height:11px;border:1px solid #484848;border-radius:2px;background:#fff"></div>
<div class="t" style="left:568px;top:316px;font:12px/14px 'Liberation Sans';color:#000;transform:scaleX(0.8801);transform-origin:0 0;">Faz parte do CONFAZ</div>
<svg style="left:550px;top:335px" width="11" height="11" viewBox="0 0 11 11"><rect x="0" y="0" width="11" height="11" rx="1.8" fill="#0a5a96"/><path d="M2.6 5.5L4.7 7.2L8.3 3.7" fill="none" stroke="#fff" stroke-width="1.15"/></svg>
<div class="t" style="left:568px;top:334px;font:12px/14px 'Liberation Sans';color:#000;transform:scaleX(0.8891);transform-origin:0 0;">Faz parte da Venda Convênio</div>
<div class="b" style="left:550px;top:353px;width:11px;height:11px;border:1px solid #484848;border-radius:2px;background:#fff"></div>
<div class="t" style="left:568px;top:352px;font:12px/14px 'Liberation Sans';color:#000;transform:scaleX(0.8804);transform-origin:0 0;">Complemento de Valores/Impostos</div>
<div class="b" style="left:550px;top:370px;width:11px;height:11px;border:1px solid #484848;border-radius:2px;background:#fff"></div>
<div class="t" style="left:568px;top:369px;font:12px/14px 'Liberation Sans';color:#000;transform:scaleX(0.9034);transform-origin:0 0;">Digitação no Checkout</div>
<div class="b" style="left:550px;top:388px;width:11px;height:11px;border:1px solid #484848;border-radius:2px;background:#fff"></div>
<div class="t" style="left:568px;top:387px;font:12px/14px 'Liberation Sans';color:#000;transform:scaleX(0.8974);transform-origin:0 0;">Exige contrato de licença para venda</div>
<div class="b" style="left:550px;top:406px;width:11px;height:11px;border:1px solid #484848;border-radius:2px;background:#fff"></div>
<div class="t" style="left:568px;top:405px;font:12px/14px 'Liberation Sans';color:#000;transform:scaleX(0.8768);transform-origin:0 0;">Compõe Cesta Básica</div>
<div class="b" style="left:550px;top:423px;width:11px;height:11px;border:1px solid #484848;border-radius:2px;background:#fff"></div>
<div class="t" style="left:568px;top:422px;font:12px/14px 'Liberation Sans';color:#000;transform:scaleX(0.8722);transform-origin:0 0;">Papel Imune</div>
<div class="b" style="left:640px;top:423px;width:11px;height:11px;border:1px solid #484848;border-radius:2px;background:#fff"></div>
<div class="t" style="left:658px;top:422px;font:12px/14px 'Liberation Sans';color:#000;transform:scaleX(0.8899);transform-origin:0 0;">Exige registro MAPA para saídas</div>
<div class="b" style="left:550px;top:440px;width:11px;height:11px;border:1px solid #484848;border-radius:2px;background:#fff"></div>
<div class="t" style="left:568px;top:439px;font:12px/14px 'Liberation Sans';color:#000;transform:scaleX(0.8751);transform-origin:0 0;">Usa Figura Geométrica</div>
<div class="b" style="left:550px;top:457px;width:11px;height:11px;border:1px solid #555;border-radius:2px;background:#d0d0d0"></div>
<div class="t" style="left:568px;top:456px;font:12px/14px 'Liberation Sans';color:#8a8a8a;transform:scaleX(0.8776);transform-origin:0 0;">Isento Suframa</div>
<div class="b" style="left:550px;top:474px;width:11px;height:11px;border:1px solid #484848;border-radius:2px;background:#fff"></div>
<div class="t" style="left:568px;top:473px;font:12px/14px 'Liberation Sans';color:#000;transform:scaleX(0.9019);transform-origin:0 0;">Isento de TSA</div>
<div class="b" style="left:550px;top:490px;width:11px;height:11px;border:1px solid #484848;border-radius:2px;background:#fff"></div>
<div class="t" style="left:568px;top:489px;font:12px/14px 'Liberation Sans';color:#000;transform:scaleX(0.9026);transform-origin:0 0;">Bebida Alcoólica</div>
<div class="b" style="left:550px;top:507px;width:11px;height:11px;border:1px solid #484848;border-radius:2px;background:#fff"></div>
<div class="t" style="left:568px;top:506px;font:12px/14px 'Liberation Sans';color:#000;transform:scaleX(0.8764);transform-origin:0 0;">Utiliza Etiqueta Anti-Furto</div>
<div class="b" style="left:550px;top:523px;width:11px;height:11px;border:1px solid #484848;border-radius:2px;background:#fff"></div>
<div class="t" style="left:568px;top:522px;width:136px;overflow:hidden;height:14px"><div class="t" style="left:0;top:0;font:12px/14px 'Liberation Sans';color:#000;transform:scaleX(.875);transform-origin:0 0">Exige Número de Requisição</div></div>
<div class="b" style="left:550px;top:540px;width:11px;height:11px;border:1px solid #484848;border-radius:2px;background:#fff"></div>
<div class="t" style="left:568px;top:539px;font:12px/14px 'Liberation Sans';color:#000;transform:scaleX(0.8896);transform-origin:0 0;">Exige Lote</div>
<svg style="left:640px;top:540px" width="11" height="11" viewBox="0 0 11 11"><rect x="0" y="0" width="11" height="11" rx="1.8" fill="#0a5a96"/><path d="M2.6 5.5L4.7 7.2L8.3 3.7" fill="none" stroke="#fff" stroke-width="1.15"/></svg>
<div class="t" style="left:658px;top:539px;font:12px/14px 'Liberation Sans';color:#000;transform:scaleX(0.8873);transform-origin:0 0;">Permite Suspensão de Pis/Cofins na Saída</div>
<div class="b" style="left:550px;top:592px;width:11px;height:11px;border:1px solid #484848;border-radius:2px;background:#fff"></div>
<div class="t" style="left:568px;top:591px;font:12px/14px 'Liberation Sans';color:#000;transform:scaleX(0.875);transform-origin:0 0;">Quantidade máxima transportada na DANFE (KG)</div>
<div class="b" style="left:807px;top:587px;width:60px;height:20px;border:1px solid #5a5a5a;border-radius:2px;background:#f0f0f0"></div>
<div class="b" style="left:550px;top:610px;width:11px;height:11px;border:1px solid #484848;border-radius:2px;background:#fff"></div>
<div class="t" style="left:568px;top:609px;font:12px/14px 'Liberation Sans';color:#000;transform:scaleX(0.8909);transform-origin:0 0;">Exige IMEI na Venda - Módulo PDV</div>
<div class="b" style="left:550px;top:628px;width:11px;height:11px;border:1px solid #484848;border-radius:2px;background:#fff"></div>
<div class="t" style="left:568px;top:627px;font:12px/14px 'Liberation Sans';color:#000;transform:scaleX(0.8837);transform-origin:0 0;">Material de Apoio</div>
<div class="t" style="left:548px;top:645px;font:12px/14px 'Liberation Sans';color:#000;transform:scaleX(0.89);transform-origin:0 0;">Checa Peso Self-Checkout TOTVS Varejo Supermercados PDV</div>
<div class="b" style="left:548px;top:659px;width:158px;height:21px;border:1px solid #333;border-radius:2px;background:#fff"></div>
<div class="t" style="left:552px;top:663px;font:12px/14px 'Liberation Sans';color:#000;transform:scaleX(0.875);transform-origin:0 0;">Sim</div>
<div class="b" style="left:548px;top:678px;width:12px;height:2px;background:#222;border-radius:0 0 0 2px"></div>
<svg style="left:691px;top:665px" width="12" height="8" viewBox="0 0 12 8"><path d="M1 1.5L5.5 6L10 1.5" fill="none" stroke="#444" stroke-width="1.6"/></svg>
<div class="b" style="left:535px;top:692px;width:339px;height:71px;border:1px solid #dadada;border-radius:7px"></div>
<div class="t" style="right:565px;top:698px;font:12px/14px 'Liberation Sans';color:#000;transform:scaleX(0.875);transform-origin:100% 0;">Qtd Parcela Emissão Etiqueta</div>
<div class="b" style="left:729px;top:695px;width:60px;height:20px;border:1px solid #5a5a5a;border-radius:2px;background:#fff"></div>
<div class="t" style="right:565px;top:720px;font:12px/14px 'Liberation Sans';color:#000;transform:scaleX(0.893);transform-origin:100% 0;">Qtde Máx. Transf. Entre Locais</div>
<div class="b" style="left:729px;top:717px;width:60px;height:20px;border:1px solid #5a5a5a;border-radius:2px;background:#fff"></div>
<div class="b" style="left:662px;top:60px;width:52px;height:28px;border:2px solid #6b6b6b;border-radius:4px;background:#fff"></div>
<div class="t" style="left:662px;width:52px;top:67px;text-align:center;font:12px/14px 'Liberation Sans';color:#00497a;"><span style="display:inline-block;transform:scaleX(0.8951);transform-origin:50% 0">Críticas</span></div>
<div class="b" style="left:582px;top:803px;width:87px;height:22px;border:1.5px solid #c3d6ee;border-radius:4px;background:#fff"></div>
<div class="t" style="left:582px;width:87px;top:807px;text-align:center;font:12px/14px 'Liberation Sans';color:#999;"><span style="display:inline-block;transform:scaleX(0.9061);transform-origin:50% 0">Divisão</span></div>
<div class="b" style="left:672px;top:803px;width:88px;height:22px;border:1.5px solid #c3d6ee;border-radius:4px;background:#fff"></div>
<div class="t" style="left:672px;width:88px;top:807px;text-align:center;font:12px/14px 'Liberation Sans';color:#999;"><span style="display:inline-block;transform:scaleX(0.9051);transform-origin:50% 0">Produto</span></div>
<div class="b" style="left:1230px;top:99px;width:20px;height:87px;border:1px solid #555;border-right:1px solid #6aa0d8;border-radius:4px 0 0 4px;background:linear-gradient(90deg,#dcdcdc,#f2f2f2 45%,#cfcfcf)"></div>
<div class="t" style="left:1231px;top:103px;width:19px;height:80px;"><div style="position:absolute;left:2px;top:0;width:80px;height:14px;font:12px/14px 'Liberation Sans';color:#111;transform-origin:0 0;transform:translate(13px,0) rotate(90deg);text-align:center"><span style="display:inline-block;transform:scaleX(.94)">Assistente IA</span></div></div>
</body></html>
